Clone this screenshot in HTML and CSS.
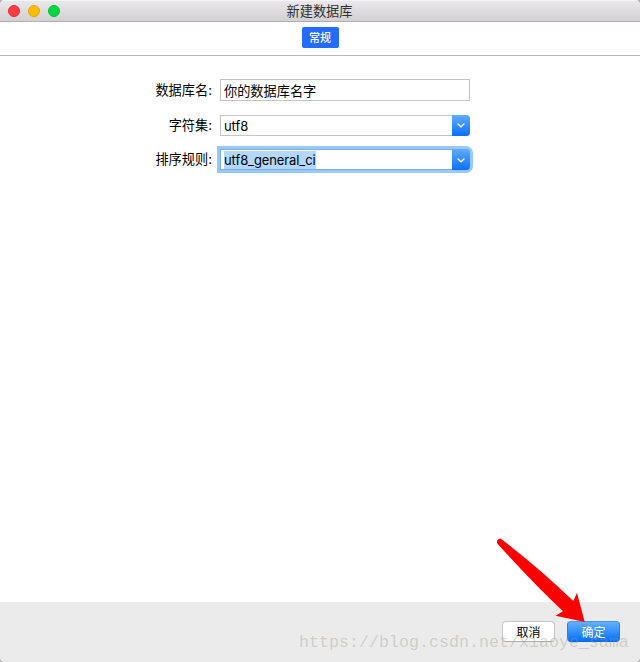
FILE: index.html
```html
<!DOCTYPE html>
<html lang="zh-CN">
<head>
<meta charset="utf-8">
<title>新建数据库</title>
<link rel="stylesheet" href="styles.css">
</head>
<body>
<div class="window">
  <header class="titlebar">
    <div class="lights"><span class="light close"></span><span class="light minimize"></span><span class="light maximize"></span></div>
    <h1 class="title">新建数据库</h1>
  </header>
  <nav class="tabs"><button class="tab">常规</button></nav>
  <main class="form">
    <label class="label first">数据库名:</label>
    <div class="field name">你的数据库名字</div>
    <label class="label">字符集:</label>
    <div class="field combo"><span class="value">utf8</span><span class="drop"><svg width="8" height="5" viewBox="0 0 8 5"><path d="M1 1L4 3.8L7 1"/></svg></span></div>
    <label class="label">排序规则:</label>
    <div class="field combo focused"><span class="value"><span class="selected">utf8_general_ci</span></span><span class="drop"><svg width="8" height="5" viewBox="0 0 8 5"><path d="M1 1L4 3.8L7 1"/></svg></span></div>
  </main>
  <footer class="footer">
    <button class="button">取消</button>
    <button class="button primary">确定</button>
  </footer>
  <div class="watermark">https://blog.csdn.net/xiaoye_sama</div>
  <svg class="arrow" width="92" height="86" viewBox="0 0 92 86"><path d="M1.300 5.400C-.2 2.600 2.800 -.4 5.600 1.300Q43 30 77.300 63L81 54.700L88.700 84L59.500 77.700L67 73.200Q36 44 1.300 5.400Z"/></svg>
</div>
</body>
</html>
```
FILE: styles.css
```css
* { box-sizing: border-box; }
body {
  margin: 0;
  background: #b5b5b5;
  font: 13.2px/20px Inter, "Noto Sans CJK SC", sans-serif;
  color: #000;
}
.window {
  position: relative;
  display: flex;
  flex-direction: column;
  width: 640px;
  height: 662px;
  overflow: hidden;
  background: #fff;
  border-radius: 5px;
}
.titlebar {
  display: grid;
  grid-template-columns: 1fr auto 1fr;
  align-items: center;
  height: 22px;
  padding: 0 8px;
  background: linear-gradient(#ebe9eb, #d2d0d2);
  border-bottom: 1px solid #b0aeb0;
  box-shadow: inset 0 1px #f5f4f5;
}
.lights { display: flex; gap: 8px; }
.light { width: 12px; height: 12px; border: 1px solid; border-radius: 50%; }
.close { background: #ff3b47; border-color: #e52d39; }
.minimize { background: #ffbd00; border-color: #e4a500; }
.maximize { background: #00d742; border-color: #00bf38; }
.title {
  margin: 0 1px 0 0;
  font-size: 13.2px;
  font-weight: 400;
  line-height: 20px;
  color: #303030;
}
.tabs {
  display: flex;
  justify-content: center;
  height: 34px;
  padding-top: 5px;
  border-bottom: 1px solid #b9b9b9;
}
.tab {
  width: 37px;
  height: 21px;
  padding: 0;
  border: 0;
  border-radius: 2px;
  background: #246bff;
  color: #fff;
  font: 500 11px/21px "Noto Sans CJK SC", sans-serif;
}
.form {
  display: grid;
  grid-template-columns: 212px 250px;
  grid-template-rows: 22px 21px 21px;
  column-gap: 8px;
  row-gap: 13.5px;
  padding-top: 23px;
  flex: 1;
  align-content: start;
}
.label { text-align: right; line-height: 21px; }
.first { line-height: 23px; }
.field {
  height: 21px;
  padding-left: 3px;
  border: 1px solid #c4c4c4;
  background: #fff;
  line-height: 20px;
}
.name { height: 22px; line-height: 22px; }
.combo {
  display: flex;
  justify-content: space-between;
  border-right: 0;
  border-radius: 0 4px 4px 0;
}
.value { font-size: 13px; letter-spacing: -.1px; line-height: 20px; }
.selected { display: block; height: 18px; margin-top: 1px; line-height: 19px; background: #b3d7ff; }
.drop {
  display: flex;
  align-items: center;
  justify-content: center;
  width: 18px;
  height: 21px;
  margin-top: -1px;
  border-radius: 0 4px 4px 0;
  background: linear-gradient(#62adfa, #0a6fff);
}
.drop svg { margin-top: 1px; }
.drop path { fill: none; stroke: #fff; stroke-width: 1.3; stroke-linecap: round; }
.focused {
  border-color: #7baee9;
  box-shadow: 0 0 0 3px #98c8fc;
}
.footer {
  display: flex;
  justify-content: flex-end;
  gap: 12px;
  height: 60px;
  padding: 19px 20px 0 0;
  background: #ebebeb;
}
.button {
  width: 53px;
  height: 21px;
  padding: 0;
  border: 1px solid #c5c5c5;
  border-bottom-color: #aeaeae;
  border-radius: 4px;
  background: #fff;
  color: #000;
  font: 12px/17px "Noto Sans CJK SC", sans-serif;
}
.primary {
  border-color: #4594ee #2a7de9 #0867df;
  background: linear-gradient(#64b0fb, #0870ff);
  color: #fff;
}
.watermark {
  position: absolute;
  left: 299px;
  top: 632px;
  font: 16.66px/22px "Liberation Mono", monospace;
  color: rgba(155, 155, 140, .38);
  white-space: nowrap;
}
.arrow { position: absolute; left: 496px; top: 538px; fill: #f00; }
```
